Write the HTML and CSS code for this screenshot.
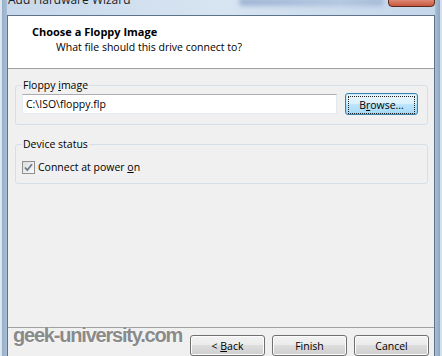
FILE: index.html
```html
<!DOCTYPE html>
<html lang="en">
<head>
    <meta charset="UTF-8">
    <title>Add Hardware Wizard</title>
    <link rel="stylesheet" href="styles.css">
</head>
<body>
    <div class="window">
        <div class="titlebar">
            <span class="title">Add Hardware Wizard</span>
            <span class="glass"></span>
            <span class="close"></span>
        </div>
        <div class="client">
            <div class="header">
                <h1>Choose a Floppy Image</h1>
                <p>What file should this drive connect to?</p>
            </div>
            <div class="body">
                <fieldset class="group group-file">
                    <legend>Floppy <u>i</u>mage</legend>
                    <div class="file-row">
                        <input class="textbox" type="text" value="C:\ISO\floppy.flp">
                        <button class="btn btn-default"><span class="focus">B<u>r</u>owse...</span></button>
                    </div>
                </fieldset>
                <fieldset class="group group-status">
                    <legend>Device status</legend>
                    <label class="check">
                        <span class="box">
                            <svg width="11" height="11" viewBox="0 0 11 11"><path d="M2 5.5 L4.3 8.2 L9 2.2" fill="none" stroke="#6e7a8c" stroke-width="1.8"/></svg>
                        </span>
                        <span>Connect at power <u>o</u>n</span>
                    </label>
                </fieldset>
            </div>
            <div class="footer">
                <button class="btn">&lt; <u>B</u>ack</button>
                <button class="btn">Finish</button>
                <button class="btn">Cancel</button>
            </div>
        </div>
        <div class="watermark">geek-university.com</div>
    </div>
</body>
</html>
```

FILE: styles.css
```css
html, body{
    margin: 0;
    padding: 0;
}
body{
    overflow: hidden;
    font-family: "Open Sans", "Liberation Sans", sans-serif;
    font-size: 10.5px;
    color: #000;
    background: #bcd0e6;
}
.window{
    position: relative;
    height: 356px;
    display: flex;
    flex-direction: column;
    padding: 0 7px;
    background: linear-gradient(to right, #dce6f1 0, #dce6f1 2px, #98afc8 2px, #a9bfd7 7px, #bcd0e6 7px, #bcd0e6 calc(100% - 7px), #a9bfd7 calc(100% - 7px), #8ea6c0 calc(100% - 2px), #d4e0ec calc(100% - 2px));
}
.titlebar{
    position: relative;
    height: 15px;
    flex: none;
    overflow: hidden;
    padding-left: 1px;
    background: linear-gradient(to right, #c8d9ec, #d7e4f1 50%, #c4d6ea);
}
.title{
    display: block;
    margin-top: -8px;
    line-height: 15px;
    font-size: 12px;
    color: #1e1e1e;
}
.glass{
    position: absolute;
    top: -2px;
    left: 232px;
    width: 145px;
    height: 8px;
    border-radius: 4px;
    background: linear-gradient(to right, #9fb5d3, #aabfdb 40%, #b3c6df 70%, #a5bad6);
    filter: blur(2px);
}
.close{
    position: absolute;
    top: -4px;
    right: 0;
    width: 45px;
    height: 9px;
    border: 1px solid #5d2a22;
    border-radius: 0 0 4px 4px;
    background: linear-gradient(#e9a28f, #c7563d);
}
.client{
    flex: 1;
    min-height: 0;
    display: flex;
    flex-direction: column;
    border: 1px solid #5e7289;
    border-bottom: none;
    background: #f0f0f0;
}
.header{
    flex: none;
    height: 44px;
    padding-top: 8px;
    background: #fff;
    border-bottom: 1px solid #a0a0a0;
}
.header h1{
    margin: 0 0 1px 24px;
    font-size: 11px;
    font-weight: bold;
    line-height: 15px;
}
.header p{
    margin: 0 0 0 48px;
    line-height: 15px;
}
.body{
    flex: 1;
    padding: 0 6px 0 7px;
}
.group{
    margin: 0;
    border: 1px solid #d5dfe5;
    border-radius: 3px;
    padding: 0 9px 8px 6px;
}
.group legend{
    padding: 0 1px;
    line-height: 15px;
}
.group-file{
    margin-top: 9px;
}
.group-status{
    margin-top: 12px;
    padding-top: 8px;
}
.file-row{
    display: flex;
    align-items: center;
    gap: 8px;
    padding-bottom: 1px;
}
.textbox{
    flex: 1;
    min-width: 0;
    height: 20px;
    box-sizing: border-box;
    margin: 0;
    padding: 0 0 0 3px;
    border: 1px solid #e3e9ef;
    border-top-color: #abadb3;
    background: #fff;
    font: inherit;
    color: #000;
}
.btn{
    width: 75px;
    height: 21px;
    box-sizing: border-box;
    margin: 0;
    padding: 0;
    border: 1px solid #707070;
    border-radius: 3px;
    background: linear-gradient(#f2f2f2 0, #ebebeb 50%, #dddddd 50%, #cfcfcf 100%);
    font: inherit;
    color: #000;
    box-shadow: inset 0 0 0 1px #fcfcfc;
}
.btn-default{
    width: 73px;
    height: 22px;
    padding: 2px;
    border-color: #3c7fb1;
    background: linear-gradient(#eaf6fd 0, #d9f0fc 50%, #bee6fd 50%, #a7d9f5 100%);
    box-shadow: inset 0 0 0 1px #48d0ff33;
}
.focus{
    display: block;
    height: 16px;
    line-height: 16px;
    border: 1px dotted #222;
}
.check{
    display: flex;
    align-items: center;
    gap: 3px;
    line-height: 15px;
}
.box{
    width: 11px;
    height: 11px;
    border: 1px solid #8f8f8f;
    background: linear-gradient(135deg, #dcdcdc, #fbfbfb);
    display: flex;
}
.footer{
    flex: none;
    display: flex;
    justify-content: flex-end;
    gap: 7px;
    padding: 7px 5px 0 0;
    height: 21px;
    border-top: 1px solid #a0a0a0;
}
.watermark{
    position: absolute;
    top: 324px;
    left: 13px;
    font-family: "Liberation Sans", sans-serif;
    font-size: 20px;
    font-weight: bold;
    letter-spacing: -1.2px;
    line-height: 23px;
    color: #8a8a8a;
    text-shadow: 0 0 2px #fff;
}
```
